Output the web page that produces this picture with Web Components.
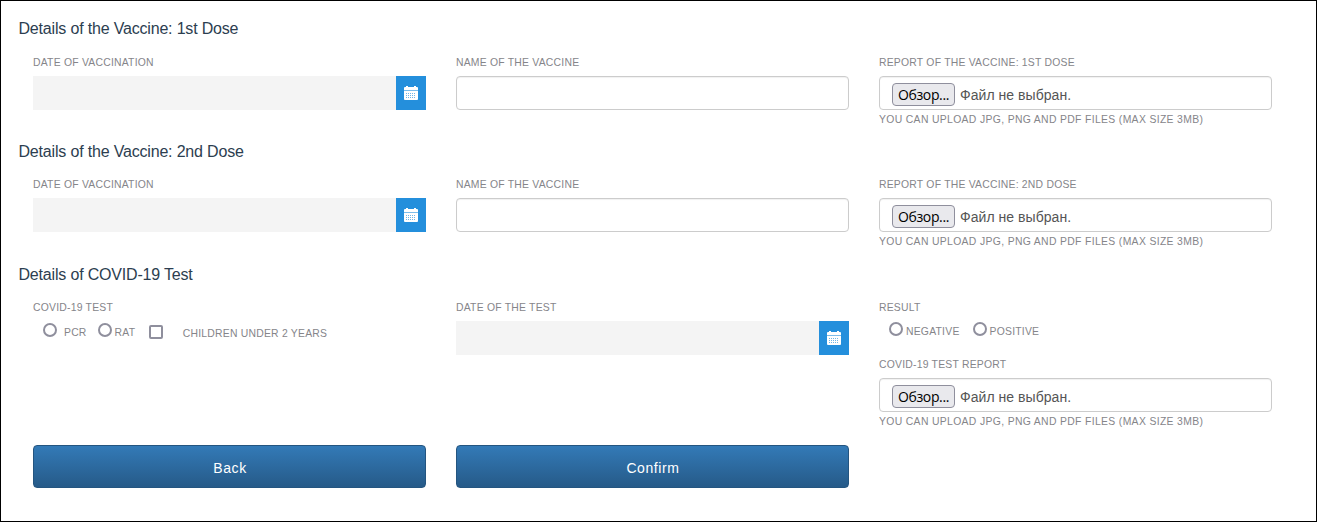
<!DOCTYPE html>
<html lang="en">
<head>
<meta charset="utf-8">
<title>Vaccine details</title>
<style>
	body {
		margin: 0;
		font-family: "Liberation Sans", Arial, sans-serif;
	}
</style>
</head>
<body>
<vaccine-form></vaccine-form>
<script>
const define = (name, template) => customElements.define(
	name,
	class extends HTMLElement {
		connectedCallback() {
			if (this.shadowRoot) return;
			this.attachShadow({ mode: "open" });
			this.shadowRoot.innerHTML = template;
		}
	}
);

define("form-section", `
	<style>
		:host {
			display: block;
			height: 122.4px;
		}
		:host([last]) {
			height: auto;
		}
		h2 {
			box-sizing: border-box;
			margin: 0 0 0 17.5px;
			padding-top: 1px;
			height: 35.6px;
			font-size: 16px;
			font-weight: 400;
			line-height: 20px;
			letter-spacing: -.18px;
			color: #2c3e50;
		}
		:host([last]) h2 {
			padding-top: 1.5px;
		}
		.row {
			display: grid;
			grid-template-columns: repeat(3, 393px);
			gap: 30px;
			margin-left: 32px;
		}
	</style>
	<h2><slot name="title"></slot></h2>
	<div class="row"><slot></slot></div>
`);

define("form-field", `
	<style>
		:host {
			display: block;
			font-size: 10.4px;
			letter-spacing: .22px;
			line-height: 16px;
			color: #85858a;
			white-space: nowrap;
		}
		.label {
			box-sizing: border-box;
			height: 22px;
			padding-top: 1px;
		}
	</style>
	<div class="label"><slot name="label"></slot></div>
	<slot></slot>
`);

define("text-input", `
	<style>
		:host {
			display: block;
			box-sizing: border-box;
			height: 34px;
			border: 1px solid #ccc;
			border-radius: 4px;
			background: #fff;
			box-shadow: inset 0 1px 1px rgba(0, 0, 0, .06);
		}
	</style>
`);

define("date-input", `
	<style>
		:host {
			display: flex;
			height: 34px;
			background: #f4f4f4;
		}
		button {
			display: flex;
			align-items: center;
			justify-content: center;
			width: 30px;
			margin-left: auto;
			padding: 0;
			border: 0;
			background: #248fdc;
		}
	</style>
	<button type="button" aria-label="Open calendar">
		<svg width="14" height="14" viewBox="0 0 14 14" fill="#fff">
			<path d="M0 4V2Q0 1 1 1H2V0H4V1H10V0H12V1H13Q14 1 14 2V4Z"/>
			<path d="M0 5H14V13Q14 14 13 14H1Q0 14 0 13Z"/>
			<path d="M0 4H14V5H0Z" opacity=".4"/>
			<path d="M2 7.500h10M2 9.500h10M2 11.500h10" fill="none" stroke="#248fdc" stroke-dasharray="1 1" opacity=".65"/>
		</svg>
	</button>
`);

define("file-input", `
	<style>
		:host {
			display: block;
		}
		.box {
			display: flex;
			align-items: center;
			box-sizing: border-box;
			height: 34px;
			padding: 3px 12px 0;
			border: 1px solid #ccc;
			border-radius: 4px;
			box-shadow: inset 0 1px 1px rgba(0, 0, 0, .06);
			font-size: 14px;
			letter-spacing: .05px;
			color: #555;
		}
		.box span {
			padding-top: 1px;
		}
		button {
			box-sizing: border-box;
			width: 63px;
			height: 23px;
			margin: 0 5px 0 0;
			padding: 1px 0 0;
			border: 1px solid #8f8f9d;
			border-radius: 4px;
			background: #e9e9ed;
			font: 14px/20px "Open Sans", "Noto Sans", sans-serif;
			letter-spacing: -.35px;
			color: #000;
		}
		.help {
			padding-top: 2px;
			letter-spacing: .34px;
		}
	</style>
	<div class="box"><button type="button">Обзор...</button><span>Файл не выбран.</span></div>
	<div class="help">YOU CAN UPLOAD JPG, PNG AND PDF FILES (MAX SIZE 3MB)</div>
`);

// type="box" draws a square check box instead of a radio
define("choice-option", `
	<style>
		:host {
			display: flex;
			align-items: center;
			gap: 3px;
		}
		i {
			box-sizing: border-box;
			width: 14px;
			height: 14px;
			border: 2px solid #8f8f9d;
			border-radius: 50%;
		}
		:host([type="box"]) i {
			border-radius: 2px;
		}
		span {
			padding-top: var(--text-drop, 5px);
		}
		:host([type="box"]) {
			gap: 20px;
			margin-left: 2.5px;
			padding-top: 3px;
		}
		:host([type="box"]) span {
			padding-top: 4px;
		}
		:host([wide]) {
			gap: 7px;
		}
	</style>
	<i></i><span><slot></slot></span>
`);

define("choice-group", `
	<style>
		:host {
			display: flex;
			height: 19px;
			padding-left: 10px;
			gap: var(--choice-gap, 11px);
		}
	</style>
	<slot></slot>
`);

define("action-button", `
	<style>
		:host {
			display: block;
		}
		button {
			width: 100%;
			height: 43px;
			padding: 3px 0 0 1px;
			border: 1px solid #245580;
			border-radius: 4px;
			background: linear-gradient(#337ab7, #265a88);
			font: 14px "Liberation Sans", Arial, sans-serif;
			letter-spacing: .6px;
			color: #fff;
		}
	</style>
	<button type="button"><slot></slot></button>
`);

define("vaccine-form", `
	<style>
		:host {
			display: block;
			box-sizing: border-box;
			width: 1317px;
			height: 522px;
			padding-top: 17.400px;
			border: 1px solid #000;
			background: #fff;
			overflow: hidden;
		}
		.tests {
			height: 171.800px;
		}
		.results {
			--choice-gap: 13px;
			--text-drop: 6px;
			height: 18px;
			margin-top: -1px;
		}
		.report {
			margin-top: 18px;
		}
		.actions {
			display: grid;
			grid-template-columns: repeat(2, 393px);
			gap: 30px;
			margin: 10px 0 0 32px;
		}
	</style>
	<form-section>
		<span slot="title">Details of the Vaccine: 1st Dose</span>
		<form-field><span slot="label">DATE OF VACCINATION</span><date-input></date-input></form-field>
		<form-field><span slot="label">NAME OF THE VACCINE</span><text-input></text-input></form-field>
		<form-field><span slot="label">REPORT OF THE VACCINE: 1ST DOSE</span><file-input></file-input></form-field>
	</form-section>
	<form-section>
		<span slot="title">Details of the Vaccine: 2nd Dose</span>
		<form-field><span slot="label">DATE OF VACCINATION</span><date-input></date-input></form-field>
		<form-field><span slot="label">NAME OF THE VACCINE</span><text-input></text-input></form-field>
		<form-field><span slot="label">REPORT OF THE VACCINE: 2ND DOSE</span><file-input></file-input></form-field>
	</form-section>
	<form-section last class="tests">
		<span slot="title">Details of COVID-19 Test</span>
		<form-field>
			<span slot="label">COVID-19 TEST</span>
			<choice-group>
				<choice-option wide>PCR</choice-option>
				<choice-option>RAT</choice-option>
				<choice-option type="box">CHILDREN UNDER 2 YEARS</choice-option>
			</choice-group>
		</form-field>
		<form-field><span slot="label">DATE OF THE TEST</span><date-input></date-input></form-field>
		<div>
			<form-field>
				<span slot="label">RESULT</span>
				<choice-group class="results">
					<choice-option>NEGATIVE</choice-option>
					<choice-option>POSITIVE</choice-option>
				</choice-group>
			</form-field>
			<form-field class="report"><span slot="label">COVID-19 TEST REPORT</span><file-input></file-input></form-field>
		</div>
	</form-section>
	<div class="actions">
		<action-button>Back</action-button>
		<action-button>Confirm</action-button>
	</div>
`);
</script>
</body>
</html>
